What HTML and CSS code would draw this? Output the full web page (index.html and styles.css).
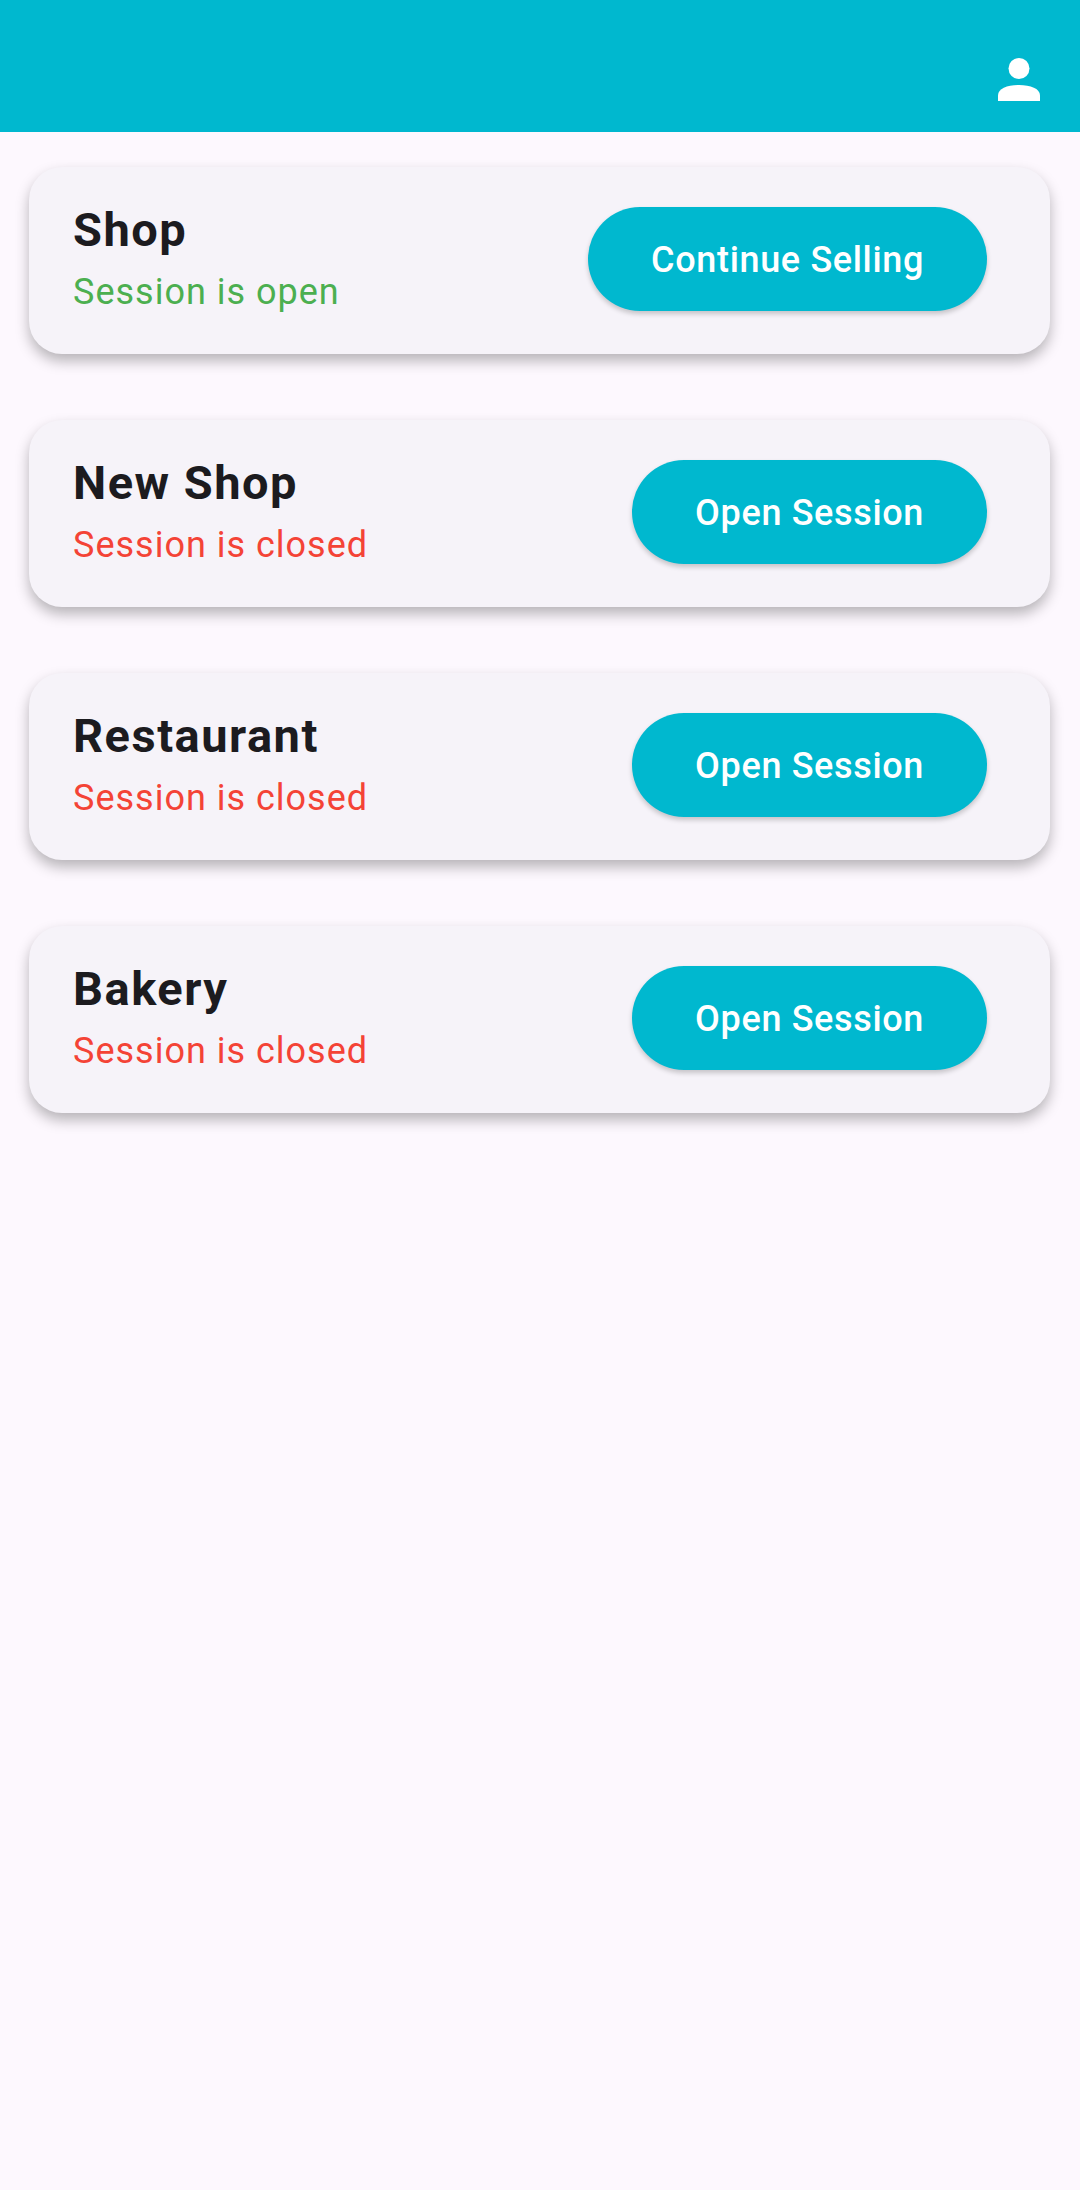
FILE: index.html
```html
<!DOCTYPE html>
<html lang="en">
  <head>
    <meta charset="UTF-8" />
    <title>Sessions</title>
    <link rel="stylesheet" href="styles.css">
  </head>
  <body>
    <header class="app-bar">
      <svg class="profile-icon" viewBox="0 0 42 43" aria-hidden="true">
        <circle cx="21" cy="10.500" r="10.500" />
        <path d="M0 43v-5.500c0-7 9.500-10.500 21-10.500s21 3.500 21 10.500v5.500z" />
      </svg>
    </header>

    <main class="shop-list">
      <div class="shop-card">
        <div class="shop-info">
          <h2>Shop</h2>
          <p class="status open">Session is open</p>
        </div>
        <button>Continue Selling</button>
      </div>

      <div class="shop-card">
        <div class="shop-info">
          <h2>New Shop</h2>
          <p class="status closed">Session is closed</p>
        </div>
        <button>Open Session</button>
      </div>

      <div class="shop-card">
        <div class="shop-info">
          <h2>Restaurant</h2>
          <p class="status closed">Session is closed</p>
        </div>
        <button>Open Session</button>
      </div>

      <div class="shop-card">
        <div class="shop-info">
          <h2>Bakery</h2>
          <p class="status closed">Session is closed</p>
        </div>
        <button>Open Session</button>
      </div>
    </main>
  </body>
</html>
```

FILE: styles.css
```css
body {
  font-family: "Roboto", sans-serif;
  margin: 0;
  min-height: 2190px;
  background: #fdf8fe;
}

.app-bar {
  height: 132px;
  box-sizing: border-box;
  background: #00b8cf;
  display: flex;
  justify-content: flex-end;
  align-items: flex-end;
  padding: 0 40px 31px 0;
}

.profile-icon {
  width: 42px;
  height: 43px;
  fill: #fff;
}

.shop-list {
  padding: 35px 30px 0 29px;
  display: flex;
  flex-direction: column;
  gap: 66px;
}

.shop-card {
  height: 187px;
  box-sizing: border-box;
  background: #f6f3f9;
  border-radius: 33px;
  box-shadow: 0 7px 14px rgba(0, 0, 0, 0.28);
  padding: 0 63px 6px 44px;
  display: flex;
  justify-content: space-between;
  align-items: center;
}

.shop-info {
  padding-top: 1px;
}

.shop-info h2 {
  margin: 0 0 10px;
  font-size: 47px;
  line-height: 58px;
  font-weight: 700;
  letter-spacing: 1.500px;
  color: #1c1b1f;
}

.status {
  margin: 0;
  font-size: 36px;
  line-height: 46px;
  letter-spacing: 1px;
}

.status.open {
  color: #4caf50;
}

.status.closed {
  color: #f44336;
}

button {
  font-family: "Roboto", sans-serif;
  font-weight: 500;
  font-size: 36px;
  letter-spacing: 0.650px;
  height: 104px;
  margin-top: 2px;
  padding: 2px 63px 0;
  background: #00b8cf;
  color: #fff;
  border: none;
  border-radius: 52px;
  box-shadow: 0 3px 5px rgba(0, 0, 0, 0.2);
}
```
